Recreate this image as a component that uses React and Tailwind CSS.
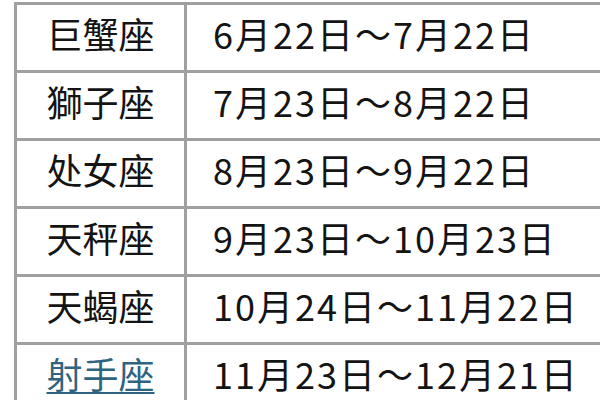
const rows = [
  { sign: "巨蟹座", dates: "6月22日～7月22日" },
  { sign: "獅子座", dates: "7月23日～8月22日" },
  { sign: "处女座", dates: "8月23日～9月22日" },
  { sign: "天秤座", dates: "9月23日～10月23日" },
  { sign: "天蝎座", dates: "10月24日～11月22日" },
  { sign: "射手座", dates: "11月23日～12月21日", link: true },
];

export default function App() {
  return (
    <div
      className="w-[600px] h-[400px] overflow-hidden bg-white text-[#141414]"
      style={{ fontFamily: '"Noto Sans CJK SC", "Noto Sans CJK JP", sans-serif' }}
    >
      {/* Table */}
      <div className="mt-[2px] ml-[14px] border-l-[3px] border-[#a0a0a0]">
        {rows.map((row) => (
          <div key={row.sign} className="flex h-[68px] border-t-[3px] border-[#a0a0a0]">
            <div className="w-[170px] shrink-0 border-r-[3px] border-[#a0a0a0] flex items-center justify-center pb-[10px]">
              {row.link ? (
                <span className="text-[36px] leading-none text-[#2f6480] underline underline-offset-[3px] decoration-2">
                  {row.sign}
                </span>
              ) : (
                <span className="text-[36px] leading-none">{row.sign}</span>
              )}
            </div>
            <div className="flex-1 flex items-center pl-[26px] pb-[10px]">
              <span className="text-[36px] leading-none whitespace-nowrap tracking-[2px]">{row.dates}</span>
            </div>
          </div>
        ))}
      </div>
    </div>
  );
}
